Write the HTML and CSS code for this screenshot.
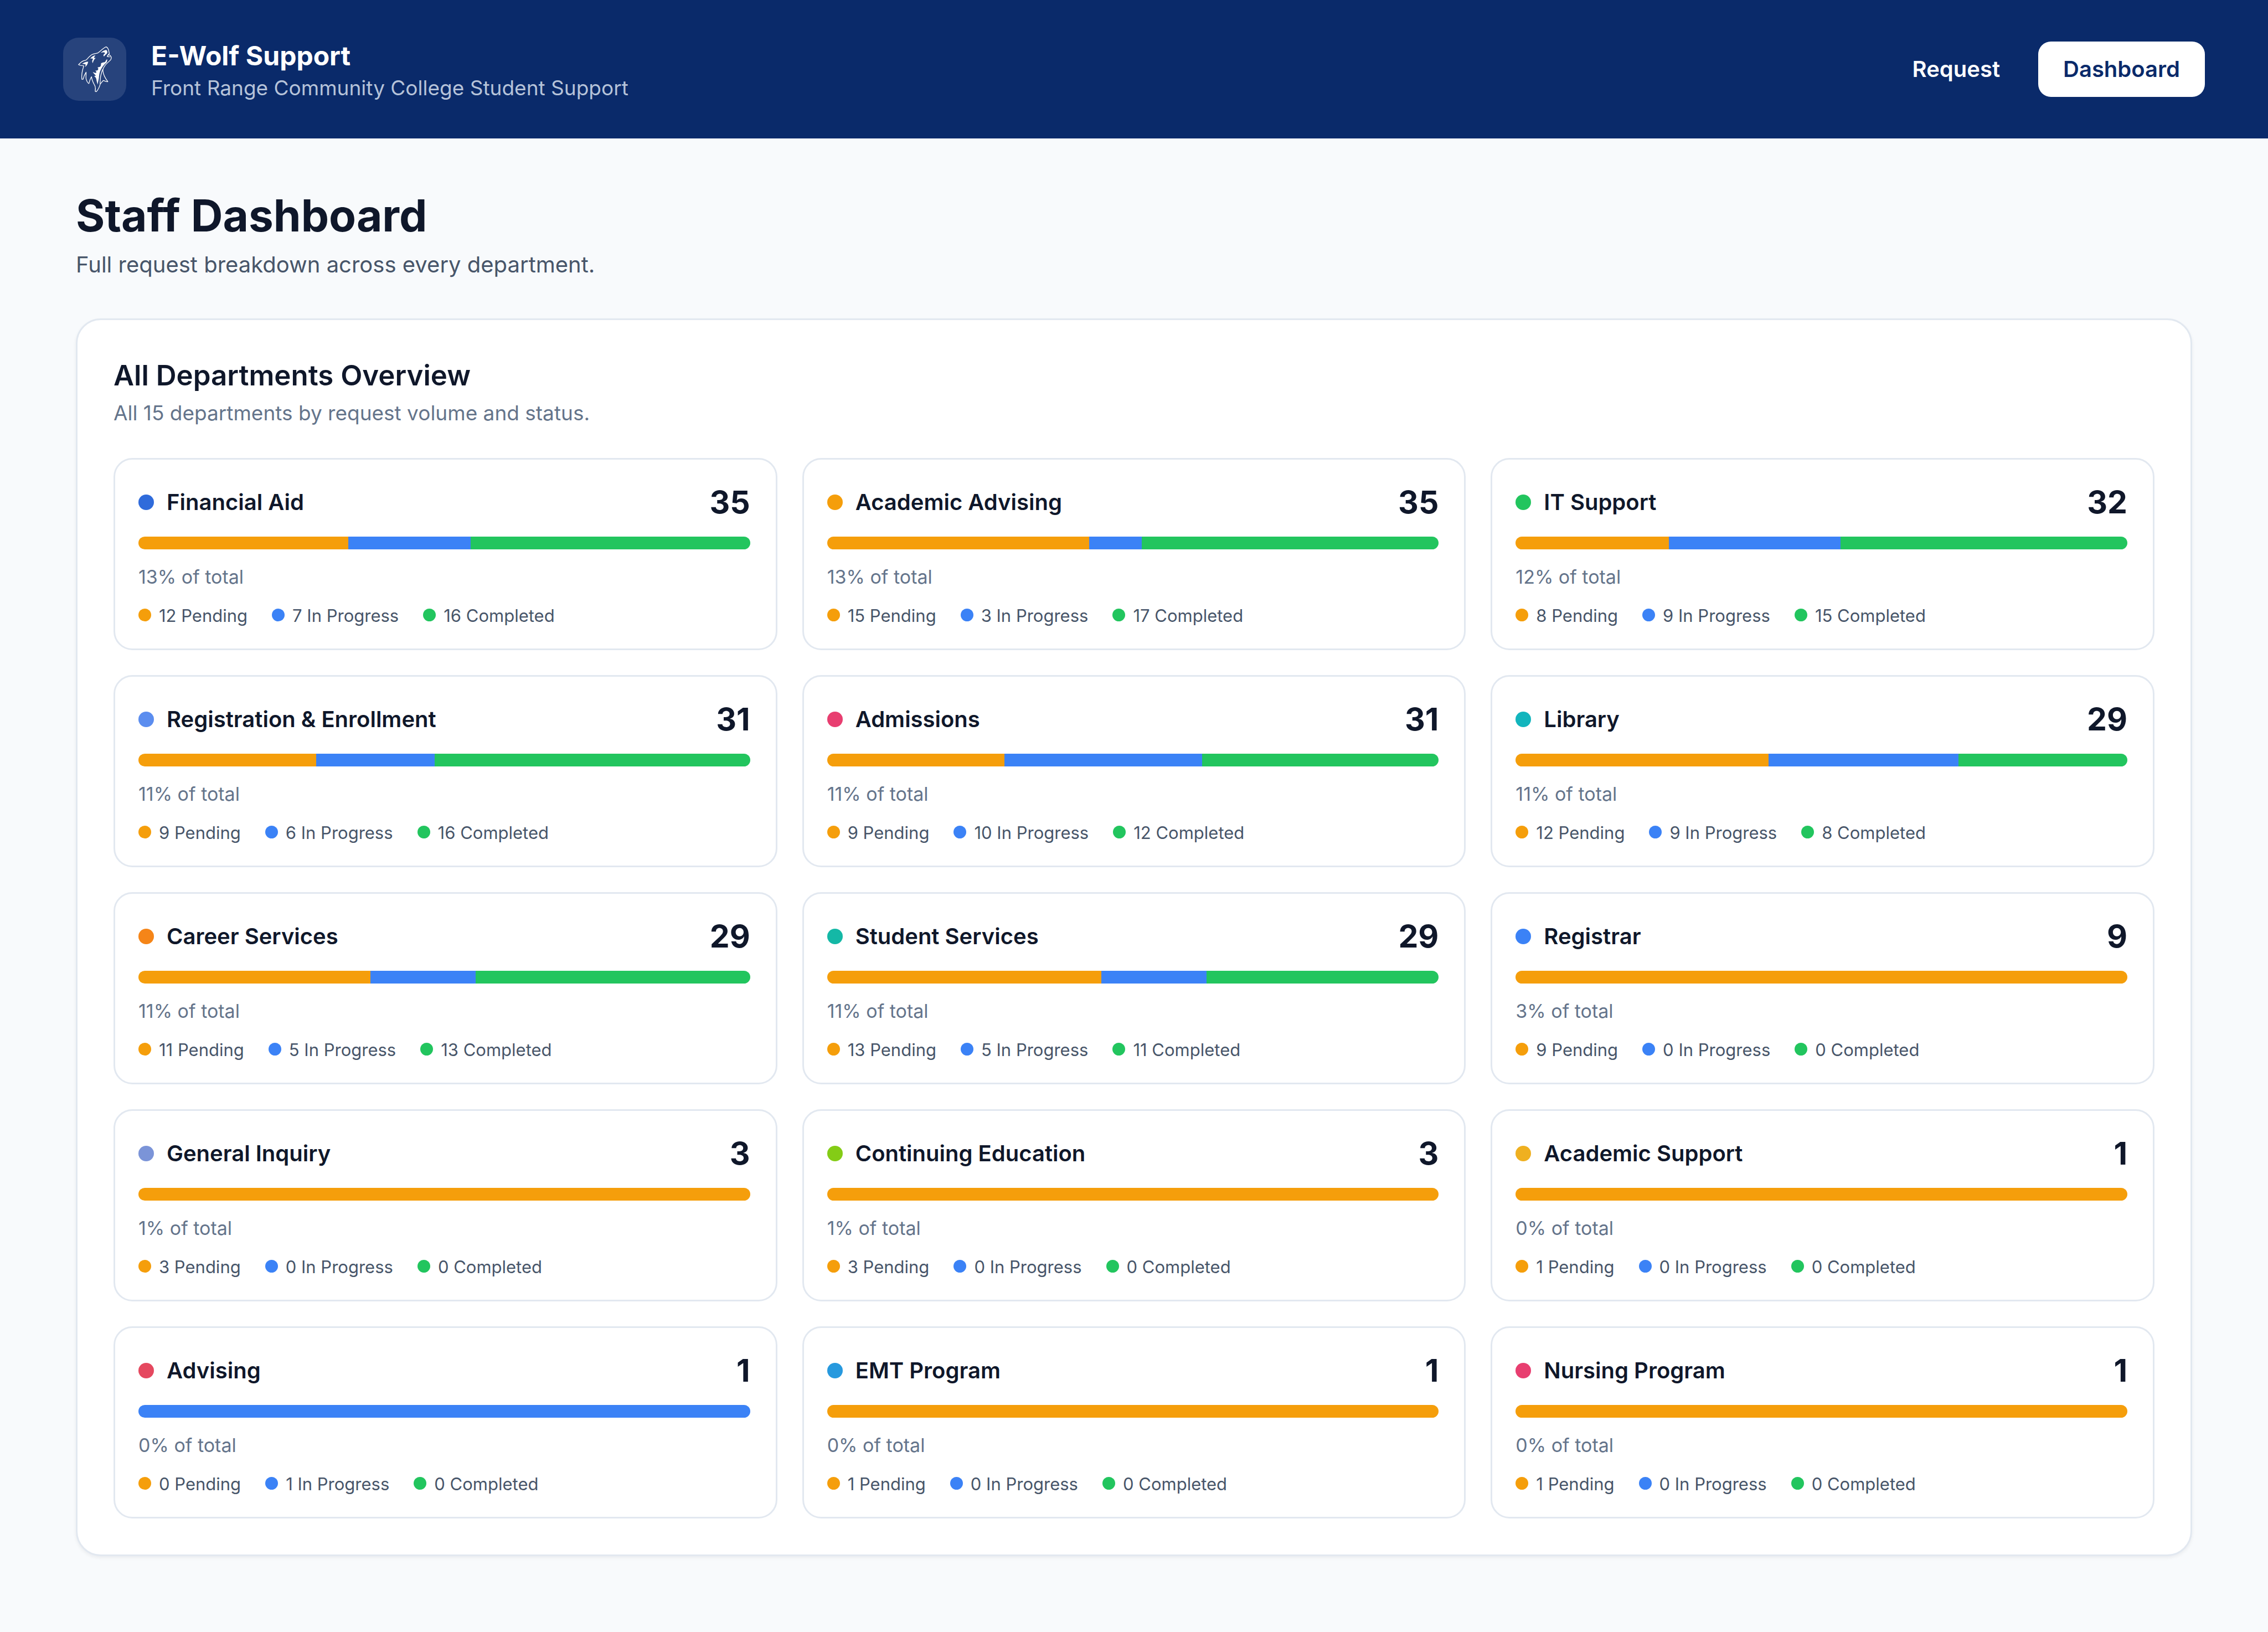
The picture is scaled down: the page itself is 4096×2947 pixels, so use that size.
FILE: index.html
```html
<!DOCTYPE html>
<html lang="en">
<head>
<meta charset="utf-8">
<meta name="viewport" content="width=device-width, initial-scale=1">
<title>E-Wolf Support – Staff Dashboard</title>
<link rel="stylesheet" href="styles.css">
</head>
<body>
<header class="site-header">
  <div class="brand">
    <span class="brand-logo">
      <svg viewBox="60 66 360 360" aria-hidden="true">
        <path class="wolf-line" d="M148 220C156 211 164 203 174 199C182 196 189 197 194 191C202 181 211 172 222 164C234 156 246 157 258 153C272 143 288 127 303 119C310 118 315 126 318 133C322 142 320 150 324 156C320 161 317 162 316 166C322 163 328 165 330 170C336 176 335 185 332 191C322 204 305 213 297 228C289 238 286 246 287 256C289 275 298 295 315 317C306 319 296 312 289 310C283 316 280 322 272 330C266 350 258 366 249 374L243 372C245 360 245 350 242 342C234 326 224 312 222 289C214 300 210 316 207 328C200 325 194 312 191 301C189 289 192 276 191 263C184 274 177 290 174 303L167 303C164 280 170 250 178 227C168 226 156 225 148 220Z"/>
        <path class="wolf-line" d="M285 247C278 268 274 280 273 295C272 310 270 318 271 330"/>
        <path class="wolf-line" d="M316 166C312 170 310 172 312 174C317 172 321 177 327 175"/>
        <path class="wolf-fill" d="M274 153C284 143 295 137 306 136C314 142 314 152 308 158C301 163 298 167 293 173C287 166 291 161 299 156C299 149 290 148 274 153Z"/>
        <path class="wolf-fill" d="M215 187C220 176 230 169 244 166C240 173 236 178 235 181L246 182C238 188 233 196 229 211C225 204 224 197 231 187C225 184 220 184 215 187Z"/>
        <path class="wolf-fill" d="M168 216C178 209 186 203 203 203C201 216 195 225 186 233C187 226 189 222 188 218C181 215 175 216 168 216Z"/>
        <path class="wolf-fill" d="M312 189C302 193 303 202 298 206C290 207 282 208 276 213C276 220 277 226 272 231C266 235 260 234 256 236C262 242 261 247 258 251C253 255 248 254 243 254C251 260 251 264 247 267C241 267 235 265 229 261C234 272 243 276 247 283L237 285C248 293 250 302 251 312C253 320 255 327 257 334C259 320 262 308 264 296C265 280 267 264 275 249C283 235 290 222 307 209C311 202 311 196 312 189Z"/>
      </svg>
    </span>
    <div class="brand-text">
      <span class="brand-name">E-Wolf Support</span>
      <span class="brand-sub">Front Range Community College Student Support</span>
    </div>
  </div>
  <nav class="site-nav" aria-label="Main">
    <a class="nav-link" href="#request">Request</a>
    <a class="nav-link nav-link-active" href="#dashboard" aria-current="page">Dashboard</a>
  </nav>
</header>

<main class="page">
  <h1 class="page-title">Staff Dashboard</h1>
  <p class="page-sub">Full request breakdown across every department.</p>

  <section class="panel">
    <h2 class="panel-title">All Departments Overview</h2>
    <p class="panel-sub">All 15 departments by request volume and status.</p>

    <div class="dept-grid">
      <article class="dept">
        <div class="dept-head"><span class="dept-dot c-financial"></span><h3 class="dept-name">Financial Aid</h3><span class="dept-count">35</span></div>
        <div class="bar"><span class="pending" style="flex-grow:12"></span><span class="progress" style="flex-grow:7"></span><span class="completed" style="flex-grow:16"></span></div>
        <p class="share">13% of total</p>
        <ul class="legend"><li><i class="pending"></i>12 Pending</li><li><i class="progress"></i>7 In Progress</li><li><i class="completed"></i>16 Completed</li></ul>
      </article>
      <article class="dept">
        <div class="dept-head"><span class="dept-dot c-academic"></span><h3 class="dept-name">Academic Advising</h3><span class="dept-count">35</span></div>
        <div class="bar"><span class="pending" style="flex-grow:15"></span><span class="progress" style="flex-grow:3"></span><span class="completed" style="flex-grow:17"></span></div>
        <p class="share">13% of total</p>
        <ul class="legend"><li><i class="pending"></i>15 Pending</li><li><i class="progress"></i>3 In Progress</li><li><i class="completed"></i>17 Completed</li></ul>
      </article>
      <article class="dept">
        <div class="dept-head"><span class="dept-dot c-it"></span><h3 class="dept-name">IT Support</h3><span class="dept-count">32</span></div>
        <div class="bar"><span class="pending" style="flex-grow:8"></span><span class="progress" style="flex-grow:9"></span><span class="completed" style="flex-grow:15"></span></div>
        <p class="share">12% of total</p>
        <ul class="legend"><li><i class="pending"></i>8 Pending</li><li><i class="progress"></i>9 In Progress</li><li><i class="completed"></i>15 Completed</li></ul>
      </article>
      <article class="dept">
        <div class="dept-head"><span class="dept-dot c-registration"></span><h3 class="dept-name">Registration &amp; Enrollment</h3><span class="dept-count">31</span></div>
        <div class="bar"><span class="pending" style="flex-grow:9"></span><span class="progress" style="flex-grow:6"></span><span class="completed" style="flex-grow:16"></span></div>
        <p class="share">11% of total</p>
        <ul class="legend"><li><i class="pending"></i>9 Pending</li><li><i class="progress"></i>6 In Progress</li><li><i class="completed"></i>16 Completed</li></ul>
      </article>
      <article class="dept">
        <div class="dept-head"><span class="dept-dot c-admissions"></span><h3 class="dept-name">Admissions</h3><span class="dept-count">31</span></div>
        <div class="bar"><span class="pending" style="flex-grow:9"></span><span class="progress" style="flex-grow:10"></span><span class="completed" style="flex-grow:12"></span></div>
        <p class="share">11% of total</p>
        <ul class="legend"><li><i class="pending"></i>9 Pending</li><li><i class="progress"></i>10 In Progress</li><li><i class="completed"></i>12 Completed</li></ul>
      </article>
      <article class="dept">
        <div class="dept-head"><span class="dept-dot c-library"></span><h3 class="dept-name">Library</h3><span class="dept-count">29</span></div>
        <div class="bar"><span class="pending" style="flex-grow:12"></span><span class="progress" style="flex-grow:9"></span><span class="completed" style="flex-grow:8"></span></div>
        <p class="share">11% of total</p>
        <ul class="legend"><li><i class="pending"></i>12 Pending</li><li><i class="progress"></i>9 In Progress</li><li><i class="completed"></i>8 Completed</li></ul>
      </article>
      <article class="dept">
        <div class="dept-head"><span class="dept-dot c-career"></span><h3 class="dept-name">Career Services</h3><span class="dept-count">29</span></div>
        <div class="bar"><span class="pending" style="flex-grow:11"></span><span class="progress" style="flex-grow:5"></span><span class="completed" style="flex-grow:13"></span></div>
        <p class="share">11% of total</p>
        <ul class="legend"><li><i class="pending"></i>11 Pending</li><li><i class="progress"></i>5 In Progress</li><li><i class="completed"></i>13 Completed</li></ul>
      </article>
      <article class="dept">
        <div class="dept-head"><span class="dept-dot c-student"></span><h3 class="dept-name">Student Services</h3><span class="dept-count">29</span></div>
        <div class="bar"><span class="pending" style="flex-grow:13"></span><span class="progress" style="flex-grow:5"></span><span class="completed" style="flex-grow:11"></span></div>
        <p class="share">11% of total</p>
        <ul class="legend"><li><i class="pending"></i>13 Pending</li><li><i class="progress"></i>5 In Progress</li><li><i class="completed"></i>11 Completed</li></ul>
      </article>
      <article class="dept">
        <div class="dept-head"><span class="dept-dot c-registrar"></span><h3 class="dept-name">Registrar</h3><span class="dept-count">9</span></div>
        <div class="bar"><span class="pending" style="flex-grow:9"></span></div>
        <p class="share">3% of total</p>
        <ul class="legend"><li><i class="pending"></i>9 Pending</li><li><i class="progress"></i>0 In Progress</li><li><i class="completed"></i>0 Completed</li></ul>
      </article>
      <article class="dept">
        <div class="dept-head"><span class="dept-dot c-general"></span><h3 class="dept-name">General Inquiry</h3><span class="dept-count">3</span></div>
        <div class="bar"><span class="pending" style="flex-grow:3"></span></div>
        <p class="share">1% of total</p>
        <ul class="legend"><li><i class="pending"></i>3 Pending</li><li><i class="progress"></i>0 In Progress</li><li><i class="completed"></i>0 Completed</li></ul>
      </article>
      <article class="dept">
        <div class="dept-head"><span class="dept-dot c-continuing"></span><h3 class="dept-name">Continuing Education</h3><span class="dept-count">3</span></div>
        <div class="bar"><span class="pending" style="flex-grow:3"></span></div>
        <p class="share">1% of total</p>
        <ul class="legend"><li><i class="pending"></i>3 Pending</li><li><i class="progress"></i>0 In Progress</li><li><i class="completed"></i>0 Completed</li></ul>
      </article>
      <article class="dept">
        <div class="dept-head"><span class="dept-dot c-support"></span><h3 class="dept-name">Academic Support</h3><span class="dept-count">1</span></div>
        <div class="bar"><span class="pending" style="flex-grow:1"></span></div>
        <p class="share">0% of total</p>
        <ul class="legend"><li><i class="pending"></i>1 Pending</li><li><i class="progress"></i>0 In Progress</li><li><i class="completed"></i>0 Completed</li></ul>
      </article>
      <article class="dept">
        <div class="dept-head"><span class="dept-dot c-advising"></span><h3 class="dept-name">Advising</h3><span class="dept-count">1</span></div>
        <div class="bar"><span class="progress" style="flex-grow:1"></span></div>
        <p class="share">0% of total</p>
        <ul class="legend"><li><i class="pending"></i>0 Pending</li><li><i class="progress"></i>1 In Progress</li><li><i class="completed"></i>0 Completed</li></ul>
      </article>
      <article class="dept">
        <div class="dept-head"><span class="dept-dot c-emt"></span><h3 class="dept-name">EMT Program</h3><span class="dept-count">1</span></div>
        <div class="bar"><span class="pending" style="flex-grow:1"></span></div>
        <p class="share">0% of total</p>
        <ul class="legend"><li><i class="pending"></i>1 Pending</li><li><i class="progress"></i>0 In Progress</li><li><i class="completed"></i>0 Completed</li></ul>
      </article>
      <article class="dept">
        <div class="dept-head"><span class="dept-dot c-nursing"></span><h3 class="dept-name">Nursing Program</h3><span class="dept-count">1</span></div>
        <div class="bar"><span class="pending" style="flex-grow:1"></span></div>
        <p class="share">0% of total</p>
        <ul class="legend"><li><i class="pending"></i>1 Pending</li><li><i class="progress"></i>0 In Progress</li><li><i class="completed"></i>0 Completed</li></ul>
      </article>
    </div>
  </section>
</main>
</body>
</html>
```
FILE: styles.css
```css
:root {
  --navy: #0a2a6a;
  --ink: #0f172a;
  --slate: #475569;
  --muted: #64748b;
  --line: #e2e8f0;
}

*, *::before, *::after { box-sizing: border-box; }

body {
  margin: 0;
  min-height: 100vh;
  background: #f8fafc;
  color: var(--ink);
  font-family: Inter, "Liberation Sans", sans-serif;
}

h1, h2, h3, p, ul { margin: 0; padding: 0; }

/* Header */
.site-header {
  display: flex;
  align-items: center;
  justify-content: space-between;
  padding: 68px 114px;
  background: var(--navy);
}
.brand { display: flex; align-items: center; gap: 45px; }
.brand-logo {
  width: 114px;
  height: 114px;
  border-radius: 28px;
  background: #27437c;
}
.brand-logo svg { display: block; width: 100%; height: 100%; }
.wolf-line { fill: none; stroke: #fff; stroke-width: 4; stroke-linejoin: round; }
.wolf-fill { fill: #fff; }
.brand-text { display: flex; flex-direction: column; gap: 2px; }
.brand-name { color: #fff; font-size: 48px; font-weight: 700; line-height: 65px; }
.brand-sub { color: #b6c3d9; font-size: 37px; line-height: 47px; }

.site-nav { display: flex; gap: 24px; }
.nav-link {
  padding: 26px 45px;
  border-radius: 23px;
  color: #fff;
  font-size: 40px;
  font-weight: 600;
  line-height: 48px;
  text-decoration: none;
}
.nav-link-active { background: #fff; color: var(--navy); }

/* Page */
.page { padding: 90px 137px 137px; }
.page-title { font-size: 80px; font-weight: 700; line-height: 97px; }
.page-sub { margin-top: 17px; color: var(--slate); font-size: 40px; line-height: 48px; }

.panel {
  margin-top: 73px;
  padding: 65px;
  border: 3px solid var(--line);
  border-radius: 45px;
  background: #fff;
  box-shadow: 0 3px 6px rgba(15, 23, 42, 0.06);
}
.panel-title { font-size: 51px; font-weight: 600; line-height: 70px; }
.panel-sub { margin-top: 8px; color: var(--muted); font-size: 37px; line-height: 50px; }

.dept-grid {
  display: grid;
  grid-template-columns: repeat(3, minmax(0, 1fr));
  gap: 45px;
  margin-top: 56px;
}

/* Department card */
.dept {
  padding: 42px 46px 42px 42px;
  border: 3px solid var(--line);
  border-radius: 34px;
  background: #fff;
}
.dept-head { display: flex; align-items: center; gap: 23px; }
.dept-dot { width: 28px; height: 28px; border-radius: 50%; }
.dept-name { flex: 1; font-size: 40px; font-weight: 600; line-height: 48px; }
.dept-count { font-size: 57px; font-weight: 700; line-height: 69px; }

.bar {
  display: flex;
  height: 23px;
  margin-top: 28px;
  border-radius: 12px;
  overflow: hidden;
}
.share { margin-top: 28px; color: var(--muted); font-size: 34px; line-height: 44px; }

.legend {
  display: flex;
  gap: 44px;
  margin-top: 31px;
  list-style: none;
  color: var(--slate);
  font-size: 31px;
  line-height: 34px;
}
.legend li { display: flex; gap: 14px; }
.legend i { width: 23px; height: 23px; margin-top: 4px; border-radius: 50%; }

.pending { background: #f59e0b; }
.progress { background: #3b82f6; }
.completed { background: #22c55e; }

.c-financial { background: #2f6bdb; }
.c-academic { background: #f59e0b; }
.c-it { background: #22c55e; }
.c-registration { background: #5b8def; }
.c-admissions { background: #e83e70; }
.c-library { background: #12b5bd; }
.c-career { background: #f58518; }
.c-student { background: #14b8a6; }
.c-registrar { background: #3b82f6; }
.c-general { background: #7b94d8; }
.c-continuing { background: #84cc16; }
.c-support { background: #efb020; }
.c-advising { background: #e5485f; }
.c-emt { background: #2799de; }
.c-nursing { background: #e83e70; }
```
